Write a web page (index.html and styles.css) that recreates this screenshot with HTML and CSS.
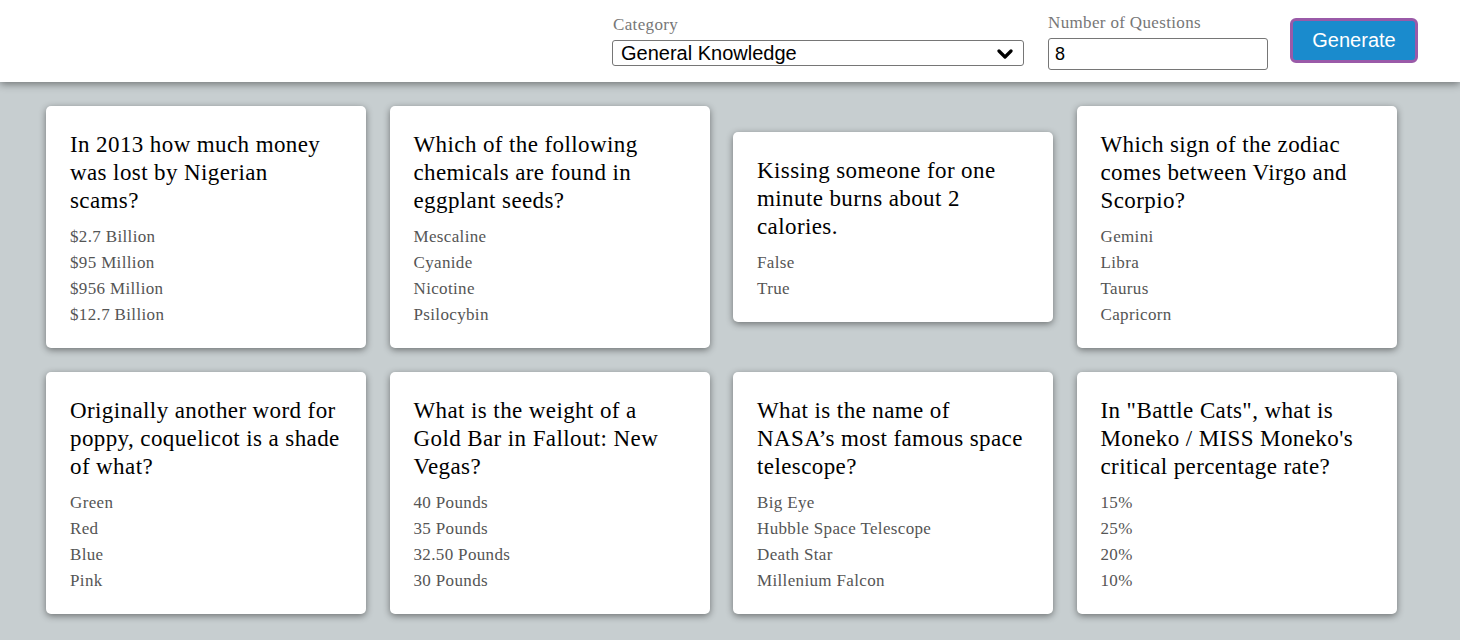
FILE: index.html
```html
<!DOCTYPE html>
<html>
<head>
<meta charset="utf-8">
<link rel="stylesheet" href="styles.css">
</head>
<body>
<header class="header">
  <form class="controls">
    <div class="field field-category">
      <label class="label">Category</label>
      <div class="select">
        <span class="select-text">General Knowledge</span>
        <svg class="chevron" width="16" height="12" viewBox="0 0 16 12"><path d="M2 3 L8 9 L14 3" fill="none" stroke="#000" stroke-width="3.2" stroke-linecap="round" stroke-linejoin="round"/></svg>
      </div>
    </div>
    <div class="field field-number">
      <label class="label">Number of Questions</label>
      <div class="input">8</div>
    </div>
    <button type="button" class="btn">Generate</button>
  </form>
</header>
<main class="grid">
  <div class="card">
    <h2 class="q">In 2013 how much money was lost by Nigerian scams?</h2>
    <ul class="answers"><li>$2.7 Billion</li><li>$95 Million</li><li>$956 Million</li><li>$12.7 Billion</li></ul>
  </div>
  <div class="card">
    <h2 class="q">Which of the following chemicals are found in eggplant seeds?</h2>
    <ul class="answers"><li>Mescaline</li><li>Cyanide</li><li>Nicotine</li><li>Psilocybin</li></ul>
  </div>
  <div class="card">
    <h2 class="q">Kissing someone for one minute burns about 2 calories.</h2>
    <ul class="answers"><li>False</li><li>True</li></ul>
  </div>
  <div class="card">
    <h2 class="q">Which sign of the zodiac comes between Virgo and Scorpio?</h2>
    <ul class="answers"><li>Gemini</li><li>Libra</li><li>Taurus</li><li>Capricorn</li></ul>
  </div>
  <div class="card">
    <h2 class="q">Originally another word for poppy, coquelicot is a shade of what?</h2>
    <ul class="answers"><li>Green</li><li>Red</li><li>Blue</li><li>Pink</li></ul>
  </div>
  <div class="card">
    <h2 class="q">What is the weight of a Gold Bar in Fallout: New Vegas?</h2>
    <ul class="answers"><li>40 Pounds</li><li>35 Pounds</li><li>32.50 Pounds</li><li>30 Pounds</li></ul>
  </div>
  <div class="card">
    <h2 class="q">What is the name of NASA’s most famous space telescope?</h2>
    <ul class="answers"><li>Big Eye</li><li>Hubble Space Telescope</li><li>Death Star</li><li>Millenium Falcon</li></ul>
  </div>
  <div class="card">
    <h2 class="q">In "Battle Cats", what is Moneko / MISS Moneko's critical percentage rate?</h2>
    <ul class="answers"><li>15%</li><li>25%</li><li>20%</li><li>10%</li></ul>
  </div>
</main>
</body>
</html>
```

FILE: styles.css
```css
* { box-sizing: border-box; }
html, body { margin: 0; padding: 0; }
body {
  background: #c7ced0;
  font-family: "Liberation Serif", "Times New Roman", serif;
  height: 640px;
  overflow: hidden;
}
.header {
  background: #fff;
  height: 82px;
  box-shadow: 0 2px 8px rgba(0, 0, 0, 0.45);
  position: relative;
  z-index: 1;
}
.controls {
  display: flex;
  align-items: flex-start;
  padding-left: 612px;
  margin: 0;
}
.field { display: flex; flex-direction: column; }
.label {
  color: #777;
  font-size: 17px;
  letter-spacing: 0.35px;
  line-height: 18px;
}
.field-category { padding-top: 16px; width: 412px; }
.field-category .label { padding-left: 1px; margin-bottom: 6px; }
.select {
  height: 26px;
  border: 1px solid #767676;
  border-radius: 3px;
  display: flex;
  align-items: center;
  justify-content: space-between;
  padding: 0 10px 0 8px;
  font-family: "Liberation Sans", Arial, sans-serif;
  font-size: 20px;
  color: #000;
}
.chevron { display: block; margin-top: 1px; }
.field-number { margin-left: 24px; padding-top: 14px; width: 220px; }
.field-number .label { margin-bottom: 6px; }
.input {
  height: 32px;
  border: 1px solid #767676;
  border-radius: 3px;
  padding: 0 6px;
  font-family: "Liberation Sans", Arial, sans-serif;
  font-size: 18px;
  line-height: 30px;
  color: #000;
}
.btn {
  margin-left: 22px;
  margin-top: 18px;
  width: 128px;
  height: 45px;
  background: #1a8bcd;
  border: 3px solid #9a5aa8;
  border-radius: 6px;
  color: #fff;
  font-family: "Liberation Sans", Arial, sans-serif;
  font-size: 20px;
  line-height: 39px;
  padding: 0;
}
.grid {
  display: grid;
  grid-template-columns: repeat(4, 320px);
  column-gap: 23.5px;
  row-gap: 24px;
  align-items: center;
  padding: 24px 0 0 46px;
}
.card {
  background: #fff;
  border-radius: 5px;
  box-shadow: 0 2px 7px rgba(0, 0, 0, 0.45);
  padding: 25px 24px 20px 24px;
}
.q {
  margin: 0 0 9px 0;
  font-weight: normal;
  font-size: 23px;
  letter-spacing: 0.4px;
  line-height: 28px;
  color: #000;
}
.answers {
  list-style: none;
  margin: 0;
  padding: 0;
  font-size: 17px;
  letter-spacing: 0.35px;
  line-height: 26px;
  color: #555;
}
```
